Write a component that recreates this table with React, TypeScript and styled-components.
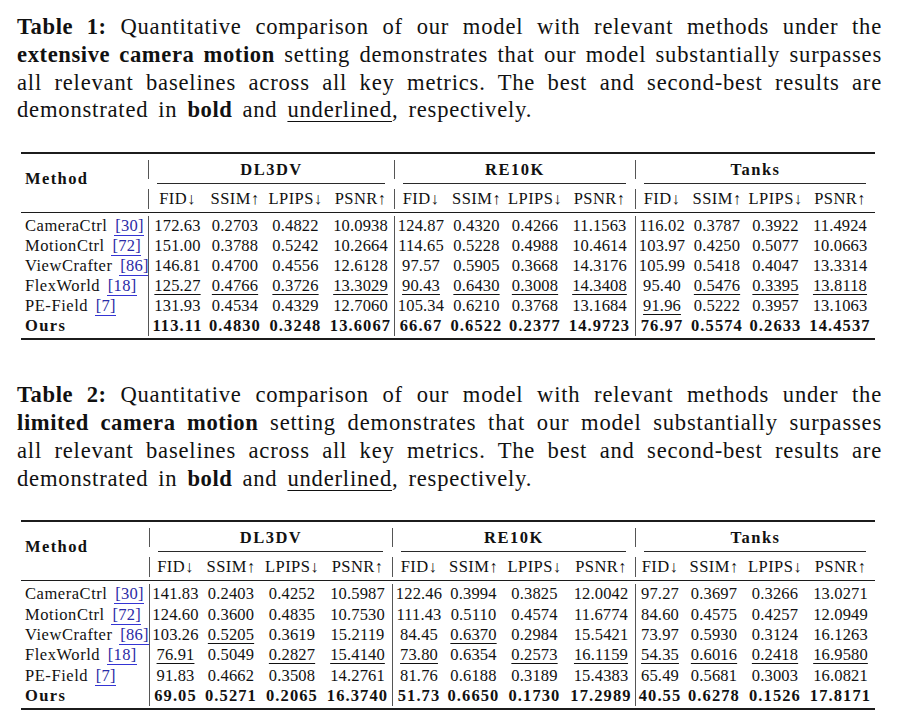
import React from 'react';
import styled, { createGlobalStyle } from 'styled-components';

const GlobalStyle = createGlobalStyle`
  html, body { margin: 0; padding: 0; background: #ffffff; }
  body { font-family: "Liberation Serif", "Times New Roman", serif; color: #111; }
`;

const Page = styled.div`
  width: 900px;
  height: 725px;
  box-sizing: border-box;
  padding: 13px 18px 0 17px;
  display: flex;
  flex-direction: column;
  overflow: hidden;
`;

const Caption = styled.div<{ $gap: number }>`
  margin-top: ${(p) => p.$gap}px;
  font-size: 22.6px;
  line-height: 27.8px;
  letter-spacing: 0.8px;
`;

const CapLine = styled.div<{ $last?: boolean }>`
  text-align: ${(p) => (p.$last ? 'left' : 'justify')};
  text-align-last: ${(p) => (p.$last ? 'left' : 'justify')};
  word-spacing: ${(p) => (p.$last ? '3.5px' : 'normal')};
`;

const B = styled.b`
  font-weight: 700;
  letter-spacing: 0.6px;
`;

const U = styled.span`
  text-decoration: underline;
  text-decoration-thickness: 1px;
  text-underline-offset: 4px;
`;

const TableBox = styled.div<{ $gap: number }>`
  margin: ${(p) => p.$gap}px 7px 0 4px;
  font-size: 16.5px;
`;

const Rule = styled.div<{ $thick?: boolean }>`
  height: ${(p) => (p.$thick ? 2 : 1)}px;
  background: #1c1c1c;
`;

const HeadGrid = styled.div<{ $cols: string }>`
  display: grid;
  grid-template-columns: ${(p) => p.$cols};
  grid-template-rows: 19px 10px 20px;
  margin: 6px 0 3px;
`;

const MethodHead = styled.div`
  grid-column: 1;
  grid-row: 1 / 4;
  display: flex;
  align-items: center;
  padding: 0 0 12px 4px;
  font-weight: 700;
  letter-spacing: 1.4px;
`;

const GroupHead = styled.div<{ $start: number }>`
  grid-column: ${(p) => p.$start} / span 4;
  grid-row: 1;
  border-left: 1px solid #555;
  text-align: center;
  line-height: 19px;
  font-weight: 700;
  letter-spacing: 1.5px;
`;

const CmidRule = styled.div<{ $start: number }>`
  grid-column: ${(p) => p.$start} / span 4;
  grid-row: 2;
  margin: 4px 9px 0 9px;
  height: 0;
  border-top: 1px solid #2a2a2a;
`;

const SubHead = styled.div<{ $sep?: boolean; $col: number }>`
  grid-column: ${(p) => p.$col};
  grid-row: 3;
  border-left: ${(p) => (p.$sep ? '1px solid #555' : 'none')};
  text-align: center;
  line-height: 20px;
  white-space: nowrap;
  letter-spacing: 0.4px;
`;

const BodyGrid = styled.div<{ $cols: string; $row: number }>`
  display: grid;
  grid-template-columns: ${(p) => p.$cols};
  grid-auto-rows: ${(p) => p.$row}px;
  margin: 3px 0 2px;
`;

const MethodCell = styled.div<{ $bold?: boolean }>`
  padding-left: 4px;
  line-height: 20px;
  white-space: nowrap;
  font-weight: ${(p) => (p.$bold ? 700 : 400)};
  letter-spacing: ${(p) => (p.$bold ? '1.4px' : '0.55px')};
`;

const Cite = styled.span`
  color: #2b2ba6;
  margin-left: 2px;
  padding-left: 1px;
  border-bottom: 1px solid #3434d4;
  letter-spacing: 0.3px;
`;

const NumCell = styled.div<{ $sep?: boolean; $bold?: boolean }>`
  border-left: ${(p) => (p.$sep ? '1px solid #555' : 'none')};
  text-align: center;
  line-height: 20px;
  white-space: nowrap;
  font-weight: ${(p) => (p.$bold ? 700 : 400)};
  letter-spacing: ${(p) => (p.$bold ? '1.1px' : '0.15px')};
`;

const NumU = styled.span`
  text-decoration: underline;
  text-decoration-thickness: 1px;
  text-underline-offset: 3px;
`;

type Row = { name: string; cite?: string; vals: string[]; bold?: boolean };

const METRICS = ['FID↓', 'SSIM↑', 'LPIPS↓', 'PSNR↑'];
const GROUPS = ['DL3DV', 'RE10K', 'Tanks'];

const t1: Row[] = [
  { name: 'CameraCtrl', cite: '[30]', vals: '172.63 0.2703 0.4822 10.0938 124.87 0.4320 0.4266 11.1563 116.02 0.3787 0.3922 11.4924'.split(' ') },
  { name: 'MotionCtrl', cite: '[72]', vals: '151.00 0.3788 0.5242 10.2664 114.65 0.5228 0.4988 10.4614 103.97 0.4250 0.5077 10.0663'.split(' ') },
  { name: 'ViewCrafter', cite: '[86]', vals: '146.81 0.4700 0.4556 12.6128 97.57 0.5905 0.3668 14.3176 105.99 0.5418 0.4047 13.3314'.split(' ') },
  { name: 'FlexWorld', cite: '[18]', vals: '_125.27 _0.4766 _0.3726 _13.3029 _90.43 _0.6430 _0.3008 _14.3408 95.40 _0.5476 _0.3395 _13.8118'.split(' ') },
  { name: 'PE-Field', cite: '[7]', vals: '131.93 0.4534 0.4329 12.7060 105.34 0.6210 0.3768 13.1684 _91.96 0.5222 0.3957 13.1063'.split(' ') },
  { name: 'Ours', bold: true, vals: '113.11 0.4830 0.3248 13.6067 66.67 0.6522 0.2377 14.9723 76.97 0.5574 0.2633 14.4537'.split(' ') },
];

const t2: Row[] = [
  { name: 'CameraCtrl', cite: '[30]', vals: '141.83 0.2403 0.4252 10.5987 122.46 0.3994 0.3825 12.0042 97.27 0.3697 0.3266 13.0271'.split(' ') },
  { name: 'MotionCtrl', cite: '[72]', vals: '124.60 0.3600 0.4835 10.7530 111.43 0.5110 0.4574 11.6774 84.60 0.4575 0.4257 12.0949'.split(' ') },
  { name: 'ViewCrafter', cite: '[86]', vals: '103.26 _0.5205 0.3619 15.2119 84.45 _0.6370 0.2984 15.5421 73.97 0.5930 0.3124 16.1263'.split(' ') },
  { name: 'FlexWorld', cite: '[18]', vals: '_76.91 0.5049 _0.2827 _15.4140 _73.80 0.6354 _0.2573 _16.1159 _54.35 _0.6016 _0.2418 _16.9580'.split(' ') },
  { name: 'PE-Field', cite: '[7]', vals: '91.83 0.4662 0.3508 14.2761 81.76 0.6188 0.3189 15.4383 65.49 0.5681 0.3003 16.0821'.split(' ') },
  { name: 'Ours', bold: true, vals: '69.05 0.5271 0.2065 16.3740 51.73 0.6650 0.1730 17.2989 40.55 0.6278 0.1526 17.8171'.split(' ') },
];

const cols1 = '127px 58px 58px 63px 67px 53px 59px 58px 71px 53px 58px 59px 70px';
const cols2 = '128px 52px 60px 62px 69px 53px 57px 65px 68px 49px 60px 62px 69px';

function ResultTable({ rows, cols, gap, rowH }: { rows: Row[]; cols: string; gap: number; rowH: number }) {
  return (
    <TableBox $gap={gap}>
      <Rule $thick />
      <HeadGrid $cols={cols}>
        <MethodHead>Method</MethodHead>
        {GROUPS.map((g, i) => (
          <GroupHead key={g} $start={2 + i * 4}>{g}</GroupHead>
        ))}
        {GROUPS.map((g, i) => (
          <CmidRule key={g + 'r'} $start={2 + i * 4} />
        ))}
        {GROUPS.map((g, gi) =>
          METRICS.map((m, mi) => (
            <SubHead key={g + m} $col={2 + gi * 4 + mi} $sep={mi === 0}>{m}</SubHead>
          ))
        )}
      </HeadGrid>
      <Rule />
      <BodyGrid $cols={cols} $row={rowH}>
        {rows.map((r) => (
          <React.Fragment key={r.name}>
            <MethodCell $bold={r.bold}>
              {r.name}
              {r.cite && <> <Cite>{r.cite}</Cite></>}
            </MethodCell>
            {r.vals.map((v, i) => {
              const under = v.startsWith('_');
              const txt = under ? v.slice(1) : v;
              return (
                <NumCell key={i} $sep={i % 4 === 0} $bold={r.bold}>
                  {under ? <NumU>{txt}</NumU> : txt}
                </NumCell>
              );
            })}
          </React.Fragment>
        ))}
      </BodyGrid>
      <Rule $thick />
    </TableBox>
  );
}

function TableCaption({ num, setting, gap }: { num: number; setting: string; gap: number }) {
  return (
    <Caption $gap={gap}>
      <CapLine>
        <B>Table {num}:</B> Quantitative comparison of our model with relevant methods under the
      </CapLine>
      <CapLine>
        <B>{setting}</B> setting demonstrates that our model substantially surpasses
      </CapLine>
      <CapLine>all relevant baselines across all key metrics. The best and second-best results are</CapLine>
      <CapLine $last>
        demonstrated in <B>bold</B> and <U>underlined</U>, respectively.
      </CapLine>
    </Caption>
  );
}

export default function App() {
  return (
    <>
      <GlobalStyle />
      <Page>
        <TableCaption num={1} setting="extensive camera motion" gap={0} />
        <ResultTable rows={t1} cols={cols1} gap={28} rowH={20} />
        <TableCaption num={2} setting="limited camera motion" gap={41} />
        <ResultTable rows={t2} cols={cols2} gap={28} rowH={20.3} />
      </Page>
    </>
  );
}
